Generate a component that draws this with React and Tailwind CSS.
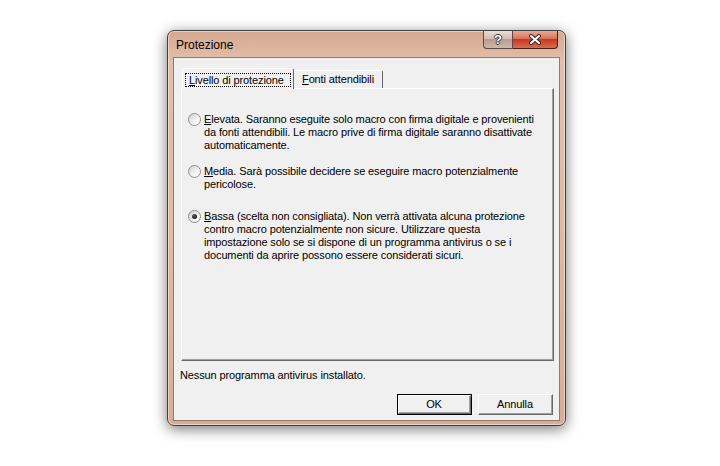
import React, { useState } from 'react';

const font = "font-['Liberation_Sans',Arial,sans-serif]";

const Radio = ({ checked, onClick }) => (
  <span
    onClick={onClick}
    className="relative flex w-[13px] h-[13px] shrink-0 items-center justify-center rounded-full border border-[#8e8f8f] bg-[linear-gradient(135deg,#cfcfcf,#f4f4f4_60%,#ffffff)]"
  >
    {checked && (
      <span className="w-[5px] h-[5px] rounded-full bg-[radial-gradient(circle_at_35%_35%,#5a5a5a,#0a0a0a)]" />
    )}
  </span>
);

const Option = ({ checked, onClick, hotkey, rest, className }) => (
  <div className={`flex items-start gap-[3px] ${className}`} onClick={onClick}>
    <Radio checked={checked} />
    <p className="leading-[13px] whitespace-nowrap">
      <span className="underline">{hotkey}</span>
      {rest}
    </p>
  </div>
);

const ClassicButton = ({ label, isDefault }) => (
  <button
    className={`w-[75px] h-[21px] ${isDefault ? 'border border-[#000]' : ''} bg-[#f0f0f0]`}
  >
    <div className="w-full h-full border-t border-l border-t-white border-l-white border-r border-b border-r-[#696969] border-b-[#696969]">
      <div className="w-full h-full flex items-center justify-center border-r border-b border-r-[#a0a0a0] border-b-[#a0a0a0] leading-none">
        {label}
      </div>
    </div>
  </button>
);

const App = () => {
  const [level, setLevel] = useState('bassa');

  return (
    <div className={`w-[720px] h-[466px] bg-white pl-[167px] pt-[30px] ${font} text-[11px] tracking-[-0.12px] text-black`}>
      <div className="w-[399px] h-[396px] flex flex-col rounded-[7px] border border-[#404040] bg-[linear-gradient(to_bottom,#d5a890,#e2bfaa_30px,#e0baa4_200px,#d8ad95)] shadow-[inset_0_0_0_1px_rgba(255,255,255,0.45),0_3px_14px_rgba(0,0,0,0.55)] px-[5px] pb-[4px]">
        {/* title bar */}
        <div className="h-[26px] flex items-start shrink-0">
          <span className="pl-[3px] pt-[7px] text-[12px] leading-[15px] tracking-normal">Protezione</span>
          <div className="ml-auto mr-[2px] flex h-[18px]">
            <div className="w-[30px] h-full flex items-center justify-center rounded-bl-[4px] border border-t-0 border-[#5c4b42] bg-[linear-gradient(to_bottom,#eadcd3,#d2bdb1_45%,#b89c8d_50%,#cdb8ac)]">
              <span className="text-white font-bold text-[13px] leading-none [text-shadow:1px_0_#3a3a3a,-1px_0_#3a3a3a,0_1px_#3a3a3a,0_-1px_#3a3a3a]">?</span>
            </div>
            <div className="w-[45px] h-full flex items-center justify-center rounded-br-[4px] border border-l-0 border-t-0 border-[#4b2218] bg-[linear-gradient(to_bottom,#eaa994,#d9705a_45%,#c33a22_50%,#dd6a4f)]">
              <svg width="14" height="11" viewBox="0 0 14 11">
                <path d="M3 2 L11 9 M11 2 L3 9" stroke="#3a2a26" strokeWidth="4" strokeLinecap="round" />
                <path d="M3 2 L11 9 M11 2 L3 9" stroke="#ffffff" strokeWidth="2" strokeLinecap="round" />
              </svg>
            </div>
          </div>
        </div>

        {/* client area */}
        <div className="flex-1 flex flex-col border border-[#8f7a6e] bg-[#f0f0f0] pl-[7px] pr-[5px]">
          {/* tabs */}
          <div className="flex items-end pt-[10px]">
            <div className="relative z-10 -mb-px ml-px w-[112px] h-[21px] bg-[#f0f0f0] rounded-t-[2px] border-t border-l border-t-white border-l-white border-r border-r-[#696969] px-[2px] pt-[4px]">
              <div className="h-[14px] border border-dotted border-black flex items-center pl-[3px] leading-none whitespace-nowrap">
                <span className="underline">L</span>ivello di protezione
              </div>
            </div>
            <div className="w-[89px] h-[18px] rounded-t-[2px] border-t border-t-white border-r border-r-[#696969] flex items-center justify-center leading-none whitespace-nowrap">
              <span>
                <span className="underline">F</span>onti attendibili
              </span>
            </div>
          </div>

          {/* tab panel */}
          <div className="h-[273px] border-t border-l border-t-white border-l-white border-r border-b border-r-[#696969] border-b-[#696969]">
            <div className="h-full border-r border-b border-r-[#a0a0a0] border-b-[#a0a0a0] pl-[6px] pt-[24px]">
              <Option
                checked={level === 'elevata'}
                onClick={() => setLevel('elevata')}
                hotkey="E"
                rest={<>levata. Saranno eseguite solo macro con firma digitale e provenienti<br />da fonti attendibili. Le macro prive di firma digitale saranno disattivate<br />automaticamente.</>}
              />
              <Option
                className="mt-[13px]"
                checked={level === 'media'}
                onClick={() => setLevel('media')}
                hotkey="M"
                rest={<>edia. Sarà possibile decidere se eseguire macro potenzialmente<br />pericolose.</>}
              />
              <Option
                className="mt-[19px]"
                checked={level === 'bassa'}
                onClick={() => setLevel('bassa')}
                hotkey="B"
                rest={<>assa (scelta non consigliata). Non verrà attivata alcuna protezione<br />contro macro potenzialmente non sicure. Utilizzare questa<br />impostazione solo se si dispone di un programma antivirus o se i<br />documenti da aprire possono essere considerati sicuri.</>}
              />
            </div>
          </div>

          <p className="mt-[8px] leading-[13px] -ml-px">Nessun programma antivirus installato.</p>

          <div className="mt-[12px] flex justify-end gap-[6px] pr-px">
            <ClassicButton label="OK" isDefault />
            <ClassicButton label="Annulla" />
          </div>
        </div>
      </div>
    </div>
  );
};

export default App;
